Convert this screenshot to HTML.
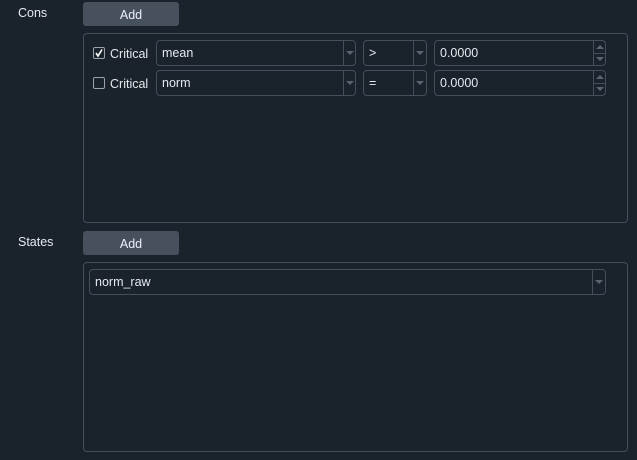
<!DOCTYPE html><html><head><style>
body{margin:0;width:637px;height:460px;background:#1a222c;font-family:"Liberation Sans",sans-serif;font-size:12.5px;color:#e6e9ec;position:relative;overflow:hidden}
.a{position:absolute;box-sizing:border-box}
.btn{background:#47515d;border-radius:3px;text-align:center;line-height:26px;color:#eef}
.box{border:1px solid #444f5a;border-radius:4px}
.f{border:1px solid #444f5a;border-radius:4px;line-height:25px;padding-left:5px}
.sep{position:absolute;top:0;bottom:0;border-left:1px solid #444f5a}
.arr{position:absolute;width:0;height:0;border-left:4px solid transparent;border-right:4px solid transparent;border-top:4px solid #5a6470;top:10px}
.cb{width:12px;height:12px;border:1px solid #9aa3ad;border-radius:2px}
</style></head><body>
<div class="a" style="left:18px;top:6px">Cons</div>
<div class="a btn" style="left:83px;top:2px;width:96px;height:24px">Add</div>
<div class="a box" style="left:83px;top:33px;width:545px;height:190px"></div>

<div class="a cb" style="left:93px;top:47px"><svg width="10" height="10" style="position:absolute;left:0;top:0"><path d="M2 5 L4 8 L8 1.5" stroke="#fff" stroke-width="1.6" fill="none"/></svg></div>
<div class="a" style="left:110px;top:47px">Critical</div>
<div class="a f" style="left:156px;top:40px;width:200px;height:26px">mean<div class="sep" style="left:186px"></div><div class="arr" style="left:189px"></div></div>
<div class="a f" style="left:363px;top:40px;width:64px;height:26px">&gt;<div class="sep" style="left:49px"></div><div class="arr" style="left:52px"></div></div>
<div class="a f" style="left:434px;top:40px;width:172px;height:26px">0.0000<div class="sep" style="left:158px"></div><div class="a" style="left:158px;top:12px;width:13px;border-top:1px solid #444f5a"></div><div class="a" style="left:161px;top:4px;border-left:4px solid transparent;border-right:4px solid transparent;border-bottom:4px solid #5a6470"></div><div class="a" style="left:161px;top:16px;border-left:4px solid transparent;border-right:4px solid transparent;border-top:4px solid #5a6470"></div></div>

<div class="a cb" style="left:93px;top:77px"></div>
<div class="a" style="left:110px;top:77px">Critical</div>
<div class="a f" style="left:156px;top:70px;width:200px;height:26px">norm<div class="sep" style="left:186px"></div><div class="arr" style="left:189px"></div></div>
<div class="a f" style="left:363px;top:70px;width:64px;height:26px">=<div class="sep" style="left:49px"></div><div class="arr" style="left:52px"></div></div>
<div class="a f" style="left:434px;top:70px;width:172px;height:26px">0.0000<div class="sep" style="left:158px"></div><div class="a" style="left:158px;top:12px;width:13px;border-top:1px solid #444f5a"></div><div class="a" style="left:161px;top:4px;border-left:4px solid transparent;border-right:4px solid transparent;border-bottom:4px solid #5a6470"></div><div class="a" style="left:161px;top:16px;border-left:4px solid transparent;border-right:4px solid transparent;border-top:4px solid #5a6470"></div></div>

<div class="a" style="left:18px;top:235px">States</div>
<div class="a btn" style="left:83px;top:231px;width:96px;height:24px">Add</div>
<div class="a box" style="left:83px;top:262px;width:545px;height:190px"></div>
<div class="a f" style="left:89px;top:269px;width:517px;height:26px">norm_raw<div class="sep" style="left:502px"></div><div class="arr" style="left:505px"></div></div>
</body></html>
